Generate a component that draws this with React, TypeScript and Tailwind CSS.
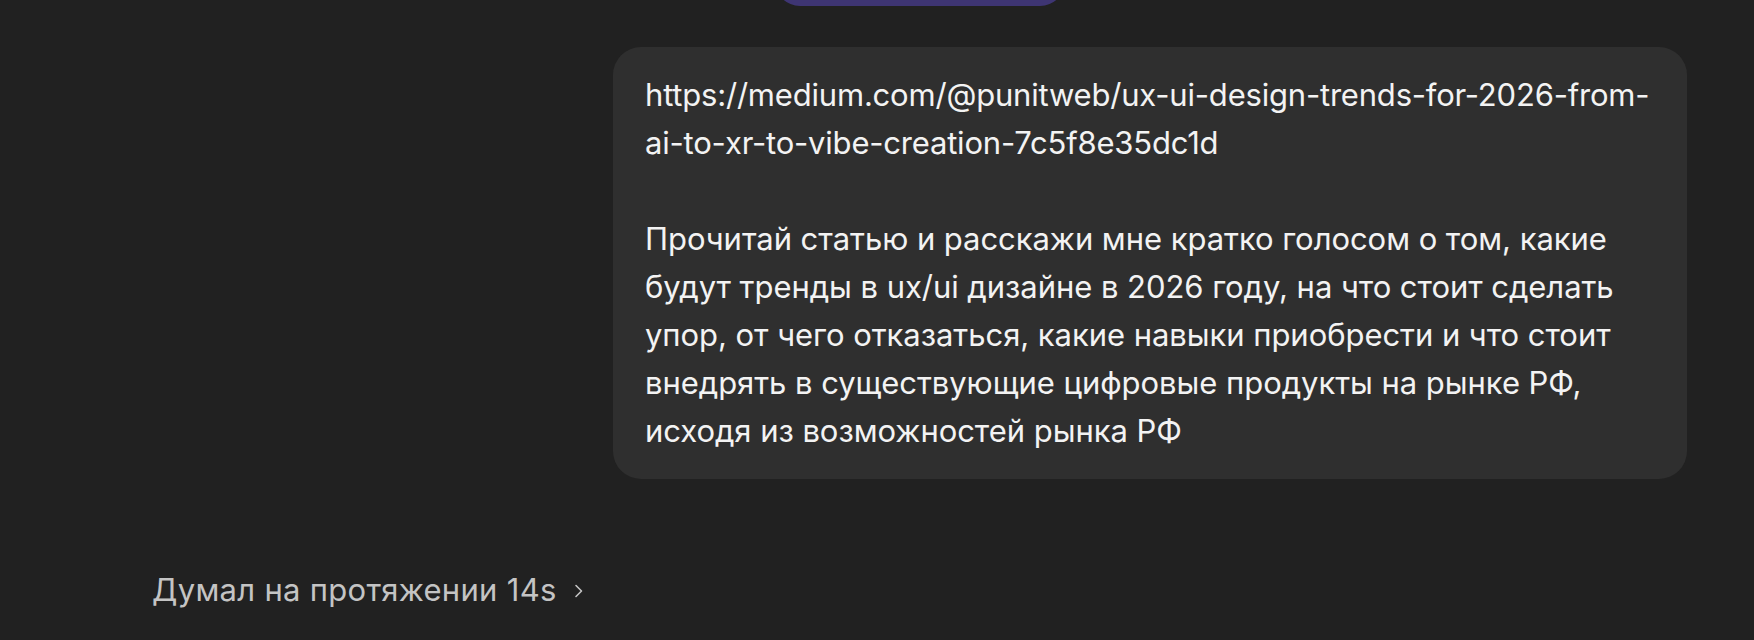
const urlLines = [
	"https://medium.com/@punitweb/ux-ui-design-trends-for-2026-from-",
	"ai-to-xr-to-vibe-creation-7c5f8e35dc1d",
];

const promptLines = [
	"Прочитай статью и расскажи мне кратко голосом о том, какие",
	"будут тренды в ux/ui дизайне в 2026 году, на что стоит сделать",
	"упор, от чего отказаться, какие навыки приобрести и что стоит",
	"внедрять в существующие цифровые продукты на рынке РФ,",
	"исходя из возможностей рынка РФ",
];

export default function App() {
	return (
		<div
			className="w-[1754px] h-[640px] overflow-hidden bg-[#212121] flex flex-col"
			style={{ fontFamily: "Inter, 'Noto Sans', sans-serif" }}
		>
			{/* cut-off button from the previous message */}
			<div className="ml-[775px] w-[290px] h-[50px] -mt-[44px] rounded-full bg-[#3e3573]" />

			<div className="flex justify-end pr-[67px] mt-[41px]">
				<div className="w-[1074px] rounded-[28px] bg-[#2f2f2f] pl-[32px] pr-[28px] pt-[24px] pb-[24px] text-[31px] leading-[48px] text-[#f3f3f3]">
					{urlLines.map((line) => (
						<div key={line} className="whitespace-nowrap tracking-[-0.2px]">{line}</div>
					))}
					<div className="h-[48px]" />
					{promptLines.map((line) => (
						<div key={line} className="whitespace-nowrap tracking-[-0.05px]">{line}</div>
					))}
				</div>
			</div>

			<div className="flex items-center pl-[152px] mt-[87px] h-[48px]">
				<span className="text-[31px] text-[#c4c4c4] tracking-[0.3px]">Думал на протяжении 14s</span>
				<svg className="ml-[17px] mt-[2px]" width="10" height="14" viewBox="0 0 10 14" fill="none">
					<path d="M2 1.5 L7.5 7 L2 12.5" stroke="#c4c4c4" strokeWidth="1.6" strokeLinecap="round" strokeLinejoin="round" />
				</svg>
			</div>
		</div>
	);
}
